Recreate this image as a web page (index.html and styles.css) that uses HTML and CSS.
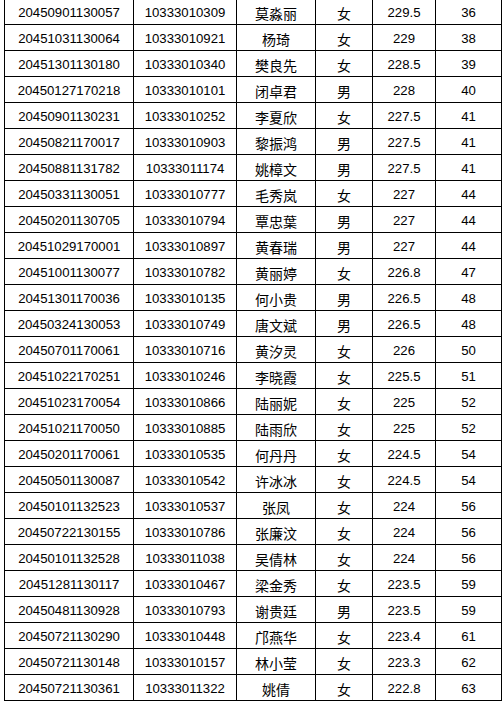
FILE: index.html
```html
<!DOCTYPE html>
<html lang="zh-CN">
<head>
<meta charset="utf-8">
<title>成绩表</title>
<link rel="stylesheet" href="styles.css">
</head>
<body>
<table class="score-table">
<colgroup>
<col class="c-exam"><col class="c-id"><col class="c-name"><col class="c-sex"><col class="c-score"><col class="c-rank">
</colgroup>
<tbody>
<tr><td>20450901130057</td><td>10333010309</td><td class="cjk">莫淼丽</td><td class="cjk">女</td><td>229.5</td><td>36</td></tr>
<tr><td>20451031130064</td><td>10333010921</td><td class="cjk">杨琦</td><td class="cjk">女</td><td>229</td><td>38</td></tr>
<tr><td>20451301130180</td><td>10333010340</td><td class="cjk">樊良先</td><td class="cjk">女</td><td>228.5</td><td>39</td></tr>
<tr><td>20450127170218</td><td>10333010101</td><td class="cjk">闭卓君</td><td class="cjk">男</td><td>228</td><td>40</td></tr>
<tr><td>20450901130231</td><td>10333010252</td><td class="cjk">李夏欣</td><td class="cjk">女</td><td>227.5</td><td>41</td></tr>
<tr><td>20450821170017</td><td>10333010903</td><td class="cjk">黎振鸿</td><td class="cjk">男</td><td>227.5</td><td>41</td></tr>
<tr><td>20450881131782</td><td>10333011174</td><td class="cjk">姚樟文</td><td class="cjk">男</td><td>227.5</td><td>41</td></tr>
<tr><td>20450331130051</td><td>10333010777</td><td class="cjk">毛秀岚</td><td class="cjk">女</td><td>227</td><td>44</td></tr>
<tr><td>20450201130705</td><td>10333010794</td><td class="cjk">覃忠葉</td><td class="cjk">男</td><td>227</td><td>44</td></tr>
<tr><td>20451029170001</td><td>10333010897</td><td class="cjk">黄春瑞</td><td class="cjk">男</td><td>227</td><td>44</td></tr>
<tr><td>20451001130077</td><td>10333010782</td><td class="cjk">黄丽婷</td><td class="cjk">女</td><td>226.8</td><td>47</td></tr>
<tr><td>20451301170036</td><td>10333010135</td><td class="cjk">何小贵</td><td class="cjk">男</td><td>226.5</td><td>48</td></tr>
<tr><td>20450324130053</td><td>10333010749</td><td class="cjk">唐文斌</td><td class="cjk">男</td><td>226.5</td><td>48</td></tr>
<tr><td>20450701170061</td><td>10333010716</td><td class="cjk">黄汐灵</td><td class="cjk">女</td><td>226</td><td>50</td></tr>
<tr><td>20451022170251</td><td>10333010246</td><td class="cjk">李晓霞</td><td class="cjk">女</td><td>225.5</td><td>51</td></tr>
<tr><td>20451023170054</td><td>10333010866</td><td class="cjk">陆丽妮</td><td class="cjk">女</td><td>225</td><td>52</td></tr>
<tr><td>20451021170050</td><td>10333010885</td><td class="cjk">陆雨欣</td><td class="cjk">女</td><td>225</td><td>52</td></tr>
<tr><td>20450201170061</td><td>10333010535</td><td class="cjk">何丹丹</td><td class="cjk">女</td><td>224.5</td><td>54</td></tr>
<tr><td>20450501130087</td><td>10333010542</td><td class="cjk">许冰冰</td><td class="cjk">女</td><td>224.5</td><td>54</td></tr>
<tr><td>20450101132523</td><td>10333010537</td><td class="cjk">张凤</td><td class="cjk">女</td><td>224</td><td>56</td></tr>
<tr><td>20450722130155</td><td>10333010786</td><td class="cjk">张廉汶</td><td class="cjk">女</td><td>224</td><td>56</td></tr>
<tr><td>20450101132528</td><td>10333011038</td><td class="cjk">吴倩林</td><td class="cjk">女</td><td>224</td><td>56</td></tr>
<tr><td>20451281130117</td><td>10333010467</td><td class="cjk">梁金秀</td><td class="cjk">女</td><td>223.5</td><td>59</td></tr>
<tr><td>20450481130928</td><td>10333010793</td><td class="cjk">谢贵廷</td><td class="cjk">男</td><td>223.5</td><td>59</td></tr>
<tr><td>20450721130290</td><td>10333010448</td><td class="cjk">邝燕华</td><td class="cjk">女</td><td>223.4</td><td>61</td></tr>
<tr><td>20450721130148</td><td>10333010157</td><td class="cjk">林小莹</td><td class="cjk">女</td><td>223.3</td><td>62</td></tr>
<tr><td>20450721130361</td><td>10333011322</td><td class="cjk">姚倩</td><td class="cjk">女</td><td>222.8</td><td>63</td></tr>
</tbody>
</table>
</body>
</html>
```

FILE: styles.css
```css
html, body {
  margin: 0;
  padding: 0;
  background: #ffffff;
}

body {
  padding: 0 0 0 4px;
}

.score-table {
  margin-top: -2px;
  border-collapse: collapse;
  table-layout: fixed;
  width: 497px;
  color: #000000;
  font-family: "Liberation Sans", "Noto Sans CJK SC", sans-serif;
  font-size: 13.2px;
}

.c-exam { width: 129px; }
.c-id { width: 103px; }
.c-name { width: 79px; }
.c-sex { width: 57px; }
.c-score { width: 63px; }
.c-rank { width: 66px; }

.score-table tr {
  height: 26px;
}

.score-table td {
  border: 1px solid #000000;
  padding: 6px 0 0 0;
  text-align: center;
  vertical-align: top;
  white-space: nowrap;
  line-height: 16px;
}

.score-table td.cjk {
  font-family: "Noto Sans CJK SC", sans-serif;
  font-size: 14px;
}
```
